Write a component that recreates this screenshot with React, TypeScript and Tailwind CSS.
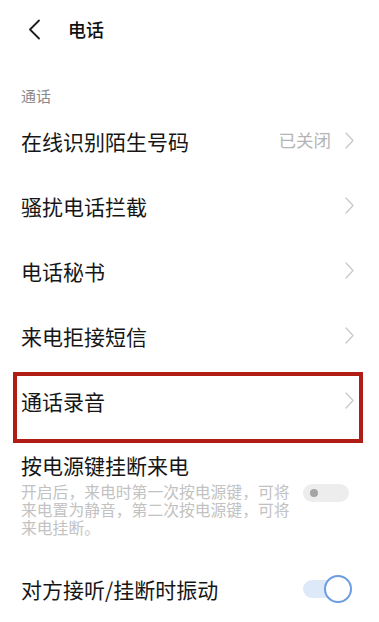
import React from "react";

const font = { fontFamily: '"Noto Sans CJK SC", "Noto Sans", sans-serif' };

function Chevron() {
  return (
    <svg width="9" height="17" viewBox="0 0 9 17" fill="none">
      <path d="M1 1 L8 8.5 L1 16" stroke="#c9c9c9" strokeWidth="1.3" strokeLinecap="round" strokeLinejoin="round" />
    </svg>
  );
}

function NavRow({ label, value, children }: { label: string; value?: string; children?: React.ReactNode }) {
  return (
    <div className="relative flex h-[65px] items-center justify-between pl-[21px] pr-[25px]">
      <span className="text-[21px] leading-[28px] text-[#161616]">{label}</span>
      <div className="flex items-center gap-[14px]">
        {value && <span className="text-[17.5px] text-[#b5b5b5]">{value}</span>}
        <Chevron />
      </div>
      {children}
    </div>
  );
}

export default function App() {
  return (
    <div className="h-[622px] w-[379px] overflow-hidden bg-white" style={font}>
      <div className="flex h-[58px] items-center pl-[28px]">
        <svg width="13" height="21" viewBox="0 0 13 21" fill="none">
          <path d="M11 1.5 L2 10.5 L11 19.5" stroke="#1c1c1c" strokeWidth="1.8" strokeLinecap="round" strokeLinejoin="round" />
        </svg>
        <span className="ml-[27px] text-[18px] font-medium text-[#111]">电话</span>
      </div>
      <div className="flex h-[50px] items-end pb-[2px] pl-[21px]">
        <span className="text-[15px] leading-[20px] text-[#8a8a8a]">通话</span>
      </div>
      <NavRow label="在线识别陌生号码" value="已关闭" />
      <NavRow label="骚扰电话拦截" />
      <NavRow label="电话秘书" />
      <NavRow label="来电拒接短信" />
      <NavRow label="通话录音">
        <div className="pointer-events-none absolute left-[13px] top-[4px] h-[71px] w-[350px] border-[4px] border-[#b01d15]" />
      </NavRow>
      <div className="pl-[21px] pr-[30px] pb-[17px] pt-[18px]">
        <div className="text-[21px] leading-[28px] text-[#161616]">按电源键挂断来电</div>
        <div className="mt-[4px] flex items-start justify-between">
          <div className="w-[274px] text-[15.8px] leading-[18px] text-[#c2c2c2]">
            开启后，来电时第一次按电源键，可将来电置为静音，第二次按电源键，可将来电挂断。
          </div>
          <div className="mt-[1px] flex h-[18px] w-[46px] items-center rounded-full bg-[#ededed] pl-[7px]">
            <div className="h-[8px] w-[8px] rounded-full bg-[#a5a5a5]" />
          </div>
        </div>
      </div>
      <div className="flex h-[70px] items-center justify-between pl-[21px] pr-[27px]">
        <span className="text-[21px] leading-[28px] text-[#161616]">对方接听/挂断时振动</span>
        <div className="relative h-[28px] w-[49px]">
          <div className="absolute left-0 top-[5px] h-[18px] w-[42px] rounded-full bg-[#dde8f9]" />
          <div className="absolute right-0 top-0 h-[28px] w-[28px] rounded-full border-[2.5px] border-[#6d9de2] bg-white" />
        </div>
      </div>
    </div>
  );
}
